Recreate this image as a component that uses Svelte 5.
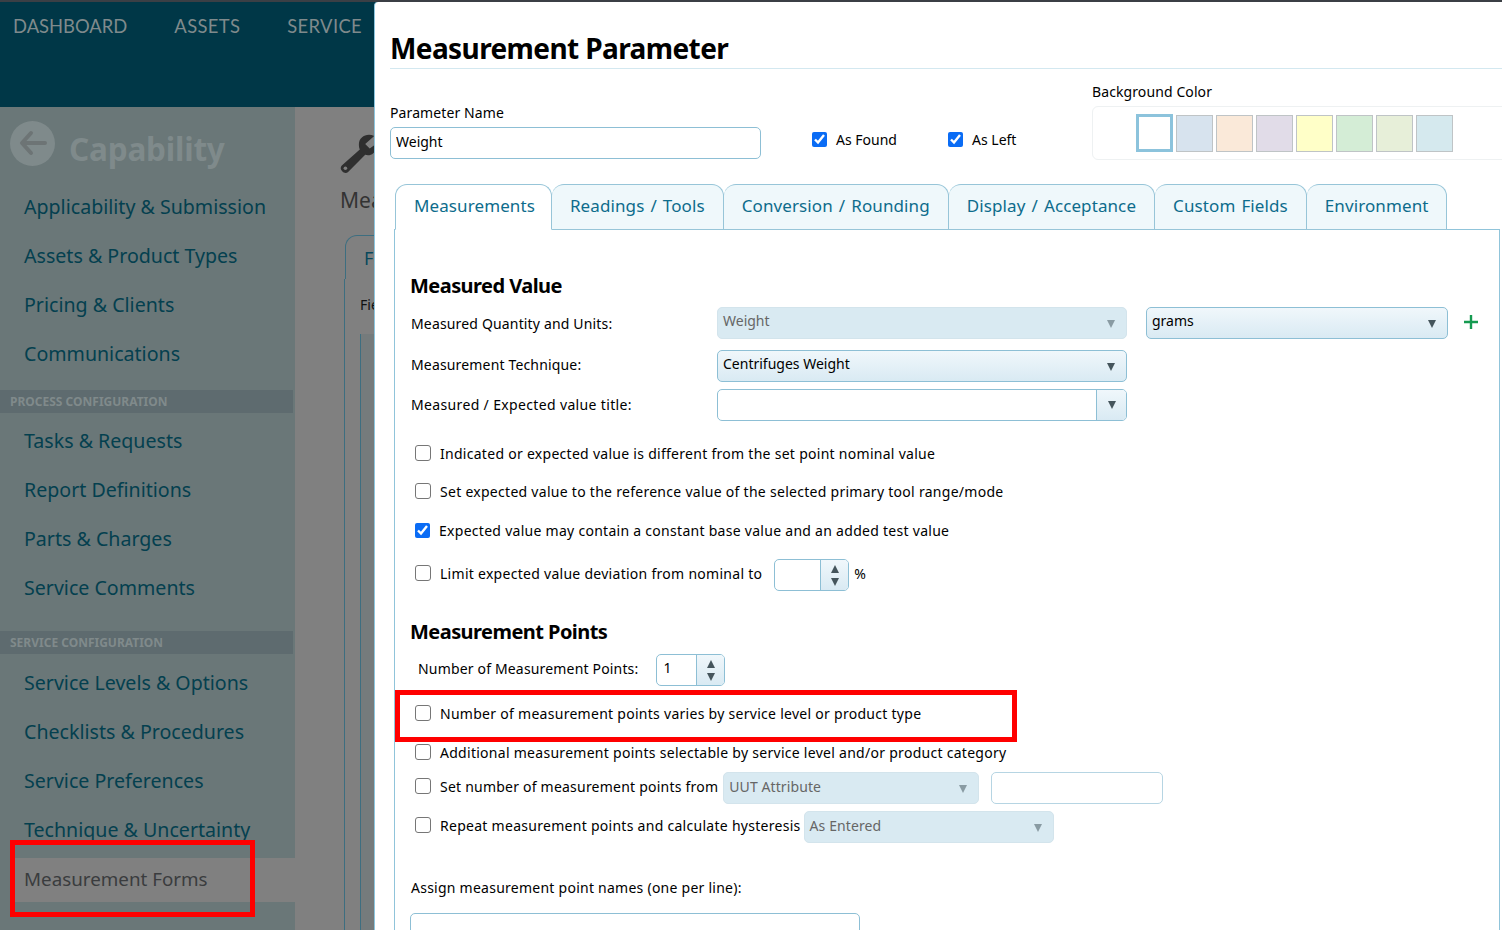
<script>
    const topNav = ["DASHBOARD", "ASSETS", "SERVICE"];
    const sideGroups = [
        {
            title: null,
            items: [
                "Applicability & Submission",
                "Assets & Product Types",
                "Pricing & Clients",
                "Communications",
            ],
        },
        {
            title: "PROCESS CONFIGURATION",
            items: [
                "Tasks & Requests",
                "Report Definitions",
                "Parts & Charges",
                "Service Comments",
            ],
        },
        {
            title: "SERVICE CONFIGURATION",
            items: [
                "Service Levels & Options",
                "Checklists & Procedures",
                "Service Preferences",
                "Technique & Uncertainty",
            ],
        },
    ];
    const tabs = [
        "Measurements",
        "Readings / Tools",
        "Conversion / Rounding",
        "Display / Acceptance",
        "Custom Fields",
        "Environment",
    ];
    const swatches = [
        "#ffffff",
        "#d7e3ee",
        "#fae9d9",
        "#e1dce8",
        "#ffffc8",
        "#d4edd6",
        "#e7efd9",
        "#d5e9ee",
    ];
</script>

<div class="page">
    <header class="topbar">
        {#each topNav as item}
            <span class="topitem">{item}</span>
        {/each}
    </header>

    <div class="under">
        <aside class="side">
            <div class="side-head">
                <span class="back">
                    <svg width="30" height="30" viewBox="0 0 30 30">
                        <path
                            d="M13 5 L4 15 L13 25 M5 15 H27"
                            fill="none"
                            stroke="#6d7475"
                            stroke-width="4"
                            stroke-linecap="round"
                            stroke-linejoin="round"
                        />
                    </svg>
                </span>
                <span class="side-title">Capability</span>
            </div>
            {#each sideGroups as group}
                {#if group.title}
                    <div class="group-title">{group.title}</div>
                {/if}
                <ul>
                    {#each group.items as item}
                        <li>{item}</li>
                    {/each}
                </ul>
            {/each}
            <div class="side-active">Measurement Forms</div>
        </aside>
        <main class="behind">
            <svg class="wrench" width="36" height="40" viewBox="0 0 40 44">
                <path
                    d="M38 3 C30 -1 21 4 21 12 C21 14 21 16 22 18 L2 36 C-2 40 5 47 9 43 L28 24 C35 26 41 21 40 12 L33 17 L28 12 Z"
                    fill="#2f2f2f"
                />
                <circle cx="6" cy="39" r="2" fill="#808080" />
            </svg>
            <div class="behind-title">Meas</div>
            <div class="behind-tab">Form</div>
            <div class="behind-panel">
                <div class="behind-label">Fields</div>
                <div class="behind-inner"></div>
            </div>
        </main>
    </div>

    <section class="modal">
        <h1>Measurement Parameter</h1>
        <div class="top-row">
            <div class="name-field">
                <label for="pname">Parameter Name</label>
                <input id="pname" class="text" value="Weight" />
            </div>
            <label class="check as-found"><input type="checkbox" checked />As Found</label>
            <label class="check as-left"><input type="checkbox" checked />As Left</label>
            <div class="color-field">
                <div class="color-label">Background Color</div>
                <div class="palette">
                    {#each swatches as color, i}
                        <span class="swatch" class:picked={i === 0} style="background:{color}"></span>
                    {/each}
                </div>
            </div>
        </div>

        <div class="tabs">
            {#each tabs as tab, i}
                <div class="tab" class:active={i === 0}>{tab}</div>
            {/each}
        </div>

        <div class="panel">
            <h2 class="first">Measured Value</h2>

            <div class="form-row r1">
                <span class="row-label">Measured Quantity and Units:</span>
                <div class="select disabled wide"><span>Weight</span><i class="arrow"></i></div>
                <div class="select units"><span>grams</span><i class="arrow"></i></div>
                <svg class="plus" width="16" height="16" viewBox="0 0 16 16">
                    <path d="M8 1 V15 M1 8 H15" stroke="#159a50" stroke-width="2.4" />
                </svg>
            </div>
            <div class="form-row r2">
                <span class="row-label">Measurement Technique:</span>
                <div class="select wide"><span>Centrifuges Weight</span><i class="arrow"></i></div>
            </div>
            <div class="form-row r3">
                <span class="row-label">Measured / Expected value title:</span>
                <div class="combo wide"><span class="combo-btn"><i class="arrow"></i></span></div>
            </div>

            <label class="check line l1"><input type="checkbox" />Indicated or expected value is different from the set point nominal value</label>
            <label class="check line l2"><input type="checkbox" />Set expected value to the reference value of the selected primary tool range/mode</label>
            <label class="check line l3"><input type="checkbox" checked />Expected value may contain a constant base value and an added test value</label>
            <div class="check line l4">
                <input type="checkbox" />Limit expected value deviation from nominal to
                <div class="spinner pct">
                    <span class="spin-val"></span>
                    <span class="spin-btns"><i class="arrow up"></i><i class="arrow"></i></span>
                </div>
                <span class="pct-sign">%</span>
            </div>

            <h2 class="second">Measurement Points</h2>
            <div class="count-row">
                <span>Number of Measurement Points:</span>
                <div class="spinner">
                    <span class="spin-val">1</span>
                    <span class="spin-btns"><i class="arrow up"></i><i class="arrow"></i></span>
                </div>
            </div>
            <label class="check line p1"><input type="checkbox" />Number of measurement points varies by service level or product type</label>
            <label class="check line p2"><input type="checkbox" />Additional measurement points selectable by service level and/or product category</label>
            <div class="check line p3">
                <input type="checkbox" />Set number of measurement points from
                <div class="select disabled attr"><span>UUT Attribute</span><i class="arrow"></i></div>
                <div class="blank"></div>
            </div>
            <div class="check line p4">
                <input type="checkbox" />Repeat measurement points and calculate hysteresis
                <div class="select disabled repeat"><span>As Entered</span><i class="arrow"></i></div>
            </div>
            <div class="assign">Assign measurement point names (one per line):</div>
            <div class="names"></div>
        </div>
    </section>

    <div class="mark mark-side"></div>
    <div class="mark mark-modal"></div>
</div>

<style>
    :global(body) {
        margin: 0;
        background: #808080;
    }

    .page {
        position: relative;
        width: 1502px;
        height: 930px;
        overflow: hidden;
        background: #808080;
        font-family: "Noto Sans", "Open Sans", sans-serif;
        font-size: 14px;
        color: #000;
    }

    .topbar {
        border-top: 2px solid #3b3f45;
        background: #003747;
        display: flex;
        gap: 47px;
        padding: 14px 0 0 13px;
        box-sizing: border-box;
        height: 107px;
    }

    .topitem {
        font-family: "Lato", sans-serif;
        font-size: 18.4px;
        line-height: 20px;
        color: #7f8a8c;
    }

    .topitem:not(:first-child) {
        letter-spacing: 0.35px;
    }

    .under {
        display: flex;
        height: 823px;
    }

    .side {
        width: 295px;
        background: #6a7778;
        flex: none;
    }

    .side-head {
        display: flex;
        align-items: center;
        gap: 14px;
        height: 46px;
        padding: 13px 0 0 10px;
    }

    .back {
        width: 45px;
        height: 45px;
        border-radius: 50%;
        background: #7f8a8b;
        display: flex;
        align-items: center;
        justify-content: center;
    }

    .side-title {
        font-size: 31.5px;
        font-weight: 700;
        color: #7f8a8b;
        letter-spacing: -0.2px;
        position: relative;
        top: 5px;
    }

    .side ul {
        list-style: none;
        margin: 0;
        padding: 0 0 0 24px;
    }

    .side li {
        height: 49px;
        line-height: 49px;
        font-size: 19.6px;
        color: #04404f;
        white-space: nowrap;
    }

    .side-head + ul {
        margin-top: 16px;
    }

    .group-title {
        width: 283px;
        height: 23px;
        line-height: 23px;
        padding-left: 10px;
        margin: 12px 0 3px;
        background: #5e6b6f;
        color: #808a8b;
        font-size: 12px;
        font-weight: 700;
    }

    ul + .group-title ~ .group-title {
        margin: 19px 0 4px;
    }

    .side-active {
        width: 340px;
        height: 44px;
        line-height: 42px;
        margin: 4px 0 0 14px;
        padding-left: 10px;
        background: #808080;
        color: #3a3c3e;
        font-size: 18.8px;
    }

    .behind {
        flex: 1;
        padding: 26px 0 0 45px;
        min-width: 0;
    }

    .wrench {
        display: block;
    }

    .behind-title {
        margin-top: 13px;
        font-size: 21px;
        color: #333;
    }

    .behind-tab {
        width: 100px;
        height: 44px;
        margin: 21px 0 0 5px;
        padding: 10px 0 0 18px;
        box-sizing: border-box;
        border: 1px solid #3d6e80;
        border-bottom: 0;
        border-radius: 12px 0 0 0;
        font-size: 18px;
        color: #07485c;
    }

    .behind-panel {
        height: 700px;
        margin-left: 4px;
        border-left: 1px solid #3d6e80;
        padding: 16px 0 0 15px;
    }

    .behind-label {
        color: #111;
        font-size: 14px;
    }

    .behind-inner {
        height: 640px;
        margin-top: 20px;
        border-left: 1px solid #3d6e80;
        background: #757b7c;
    }

    .modal {
        position: absolute;
        left: 374px;
        top: 2px;
        width: 1128px;
        height: 928px;
        box-sizing: border-box;
        background: #fff;
        border-left: 1px solid #8cc6df;
        border-radius: 4px 0 0 0;
        padding: 0 0 0 15px;
    }

    h1 {
        margin: 0;
        height: 67px;
        padding-top: 28px;
        box-sizing: border-box;
        font-size: 28px;
        line-height: 36px;
        font-weight: 700;
        letter-spacing: -0.6px;
        border-bottom: 1px solid #d3e8f0;
    }

    .top-row {
        position: relative;
        height: 115px;
    }

    .name-field {
        position: absolute;
        left: 0;
        top: 34px;
        width: 371px;
    }

    .name-field label {
        display: block;
        height: 24px;
        line-height: 19px;
        font-size: 14px;
        letter-spacing: 0.1px;
    }

    .text {
        display: block;
        box-sizing: border-box;
        width: 100%;
        height: 32px;
        padding: 0 5px 4px;
        border: 1px solid #8dbfd5;
        border-radius: 5px;
        font: inherit;
        outline: none;
    }

    .check {
        display: flex;
        align-items: center;
        white-space: nowrap;
        font-size: 14px;
    }

    .check input {
        width: 15px;
        height: 15px;
        margin: 0 9px 0 0;
        accent-color: #0a6cf5;
    }

    .as-found {
        position: absolute;
        left: 422px;
        top: 61px;
    }

    .as-left {
        position: absolute;
        left: 558px;
        top: 61px;
    }

    .color-field {
        position: absolute;
        left: 702px;
        top: 13px;
        right: -10px;
    }

    .color-label {
        height: 24px;
        line-height: 19px;
        font-size: 14px;
        letter-spacing: 0.1px;
    }

    .palette {
        display: flex;
        gap: 3px;
        height: 54px;
        box-sizing: border-box;
        padding: 8px 0 0 43px;
        border: 1px solid #eef1f2;
        border-radius: 6px;
    }

    .swatch {
        width: 37px;
        height: 37px;
        box-sizing: border-box;
        border: 1px solid #bfc4c6;
    }

    .swatch.picked {
        height: 38px;
        margin-top: -1px;
        border: 3px solid #8cc3dc;
    }

    .tabs {
        display: flex;
        height: 46px;
        margin-left: 5px;
        position: relative;
    }

    .tab {
        box-sizing: border-box;
        height: 46px;
        padding: 0 18px;
        line-height: 42px;
        font-size: 17px;
        letter-spacing: 0.1px;
        word-spacing: 1.5px;
        color: #0d6c8c;
        background: #eff8fb;
        border: 1px solid #97c5d8;
        border-left: 0;
        border-radius: 12px 12px 0 0;
        white-space: nowrap;
    }

    .tab.active {
        padding-right: 16px;
        background: #fff;
        border-left: 1px solid #97c5d8;
        border-bottom: 1px solid #fff;
        position: relative;
        z-index: 1;
    }

    .panel {
        margin-left: 4px;
        width: 1106px;
        height: 760px;
        box-sizing: border-box;
        border: 1px solid #90c4da;
        border-bottom: 0;
        margin-top: -1px;
        padding-left: 16px;
    }

    h2 {
        margin: 0 0 0 -1px;
        font-size: 20px;
        line-height: 26px;
        font-weight: 700;
        letter-spacing: -0.55px;
    }

    h2.first {
        padding-top: 43px;
    }

    h2.second {
        margin-top: 30px;
    }

    .form-row {
        display: flex;
        align-items: flex-start;
        white-space: nowrap;
    }

    .row-label {
        width: 306px;
        flex: none;
        font-size: 14px;
        line-height: 34px;
        letter-spacing: 0.16px;
    }

    .r1 {
        margin-top: 8px;
    }

    .r2 {
        margin-top: 9px;
    }

    .r2 .row-label {
        line-height: 30px;
    }

    .r3 {
        margin-top: 7px;
    }

    .r3 .row-label {
        line-height: 32px;
        letter-spacing: 0.35px;
    }

    .select {
        position: relative;
        box-sizing: border-box;
        height: 32px;
        line-height: 26px;
        padding-left: 5px;
        border: 1px solid #8dbfd5;
        border-radius: 5px;
        background: linear-gradient(#f0f7fb, #d9eaf3);
        font-size: 14px;
    }

    .select.disabled {
        background: #d9eaf2;
        border-color: #d3e4ec;
        color: #666;
    }

    .wide {
        width: 410px;
    }

    .units {
        width: 302px;
        margin-left: 19px;
    }

    .plus {
        margin: 7px 0 0 15px;
    }

    .arrow {
        display: block;
        width: 0;
        height: 0;
        border-left: 4px solid transparent;
        border-right: 4px solid transparent;
        border-top: 8px solid #45555c;
    }

    .arrow.up {
        border-top: 0;
        border-bottom: 8px solid #45555c;
    }

    .select .arrow {
        position: absolute;
        right: 11px;
        top: 12px;
    }

    .select.disabled .arrow {
        border-top-color: #899ba3;
    }

    .combo {
        box-sizing: border-box;
        height: 32px;
        display: flex;
        justify-content: flex-end;
        border: 1px solid #8dbfd5;
        border-radius: 5px;
    }

    .combo-btn {
        width: 30px;
        box-sizing: border-box;
        border-left: 1px solid #8dbfd5;
        background: linear-gradient(#f0f7fb, #d9eaf3);
        border-radius: 0 4px 4px 0;
        display: flex;
        align-items: center;
        justify-content: center;
    }

    .line {
        height: 32px;
        margin-left: 4px;
        letter-spacing: 0.28px;
    }

    .line .select {
        line-height: 28px;
    }

    .line .select,
    .line .spin-val {
        letter-spacing: 0.1px;
    }

    .line input {
        margin-right: 9px;
    }

    .line input:not(:checked) {
        appearance: none;
        box-sizing: border-box;
        width: 16px;
        height: 16px;
        border: 1px solid #767676;
        border-radius: 3px;
        background: #fff;
    }

    .l1 { margin-top: 16px; }
    .l2 { margin-top: 6px; }
    .l3 { margin-top: 7px; }
    .l4 { margin-top: 11px; }
    .p1 { margin-top: 11px; }
    .p2 { margin-top: 7px; }
    .p3 { margin-top: 2px; letter-spacing: 0.22px; }
    .p4 { margin-top: 7px; }

    .spinner {
        box-sizing: border-box;
        width: 69px;
        height: 32px;
        display: flex;
        border: 1px solid #8dbfd5;
        border-radius: 5px;
    }

    .spinner.pct {
        width: 75px;
        margin: 4px 0 0 12px;
    }

    .spin-val {
        flex: 1;
        padding-left: 6px;
        line-height: 26px;
    }

    .spin-btns {
        width: 28px;
        box-sizing: border-box;
        border-left: 1px solid #8dbfd5;
        background: linear-gradient(#f0f7fb, #d9eaf3);
        border-radius: 0 4px 4px 0;
        display: flex;
        flex-direction: column;
        align-items: center;
        justify-content: center;
        gap: 5px;
    }

    .pct-sign {
        margin-left: 5px;
    }

    .count-row {
        display: flex;
        align-items: flex-start;
        gap: 18px;
        margin: 9px 0 0 7px;
        letter-spacing: 0.17px;
        line-height: 30px;
    }

    .attr {
        width: 256px;
        margin: 4px 0 0 5px;
        font-size: 14px;
    }

    .blank {
        box-sizing: border-box;
        width: 172px;
        height: 32px;
        margin: 4px 0 0 12px;
        border: 1px solid #b6d5e3;
        border-radius: 5px;
    }

    .repeat {
        width: 250px;
        margin: 4px 0 0 3px;
    }

    .assign {
        margin-top: 37px;
        line-height: 19px;
        letter-spacing: 0.25px;
    }

    .names {
        width: 450px;
        height: 60px;
        margin: 16px 0 0 -1px;
        box-sizing: border-box;
        border: 1px solid #8dbfd5;
        border-radius: 5px;
    }

    .mark {
        position: absolute;
        box-sizing: border-box;
        border: 5px solid #ff0000;
    }

    .mark-side {
        left: 10px;
        top: 840px;
        width: 245px;
        height: 77px;
    }

    .mark-modal {
        left: 395px;
        top: 690px;
        width: 622px;
        height: 52px;
    }
</style>
